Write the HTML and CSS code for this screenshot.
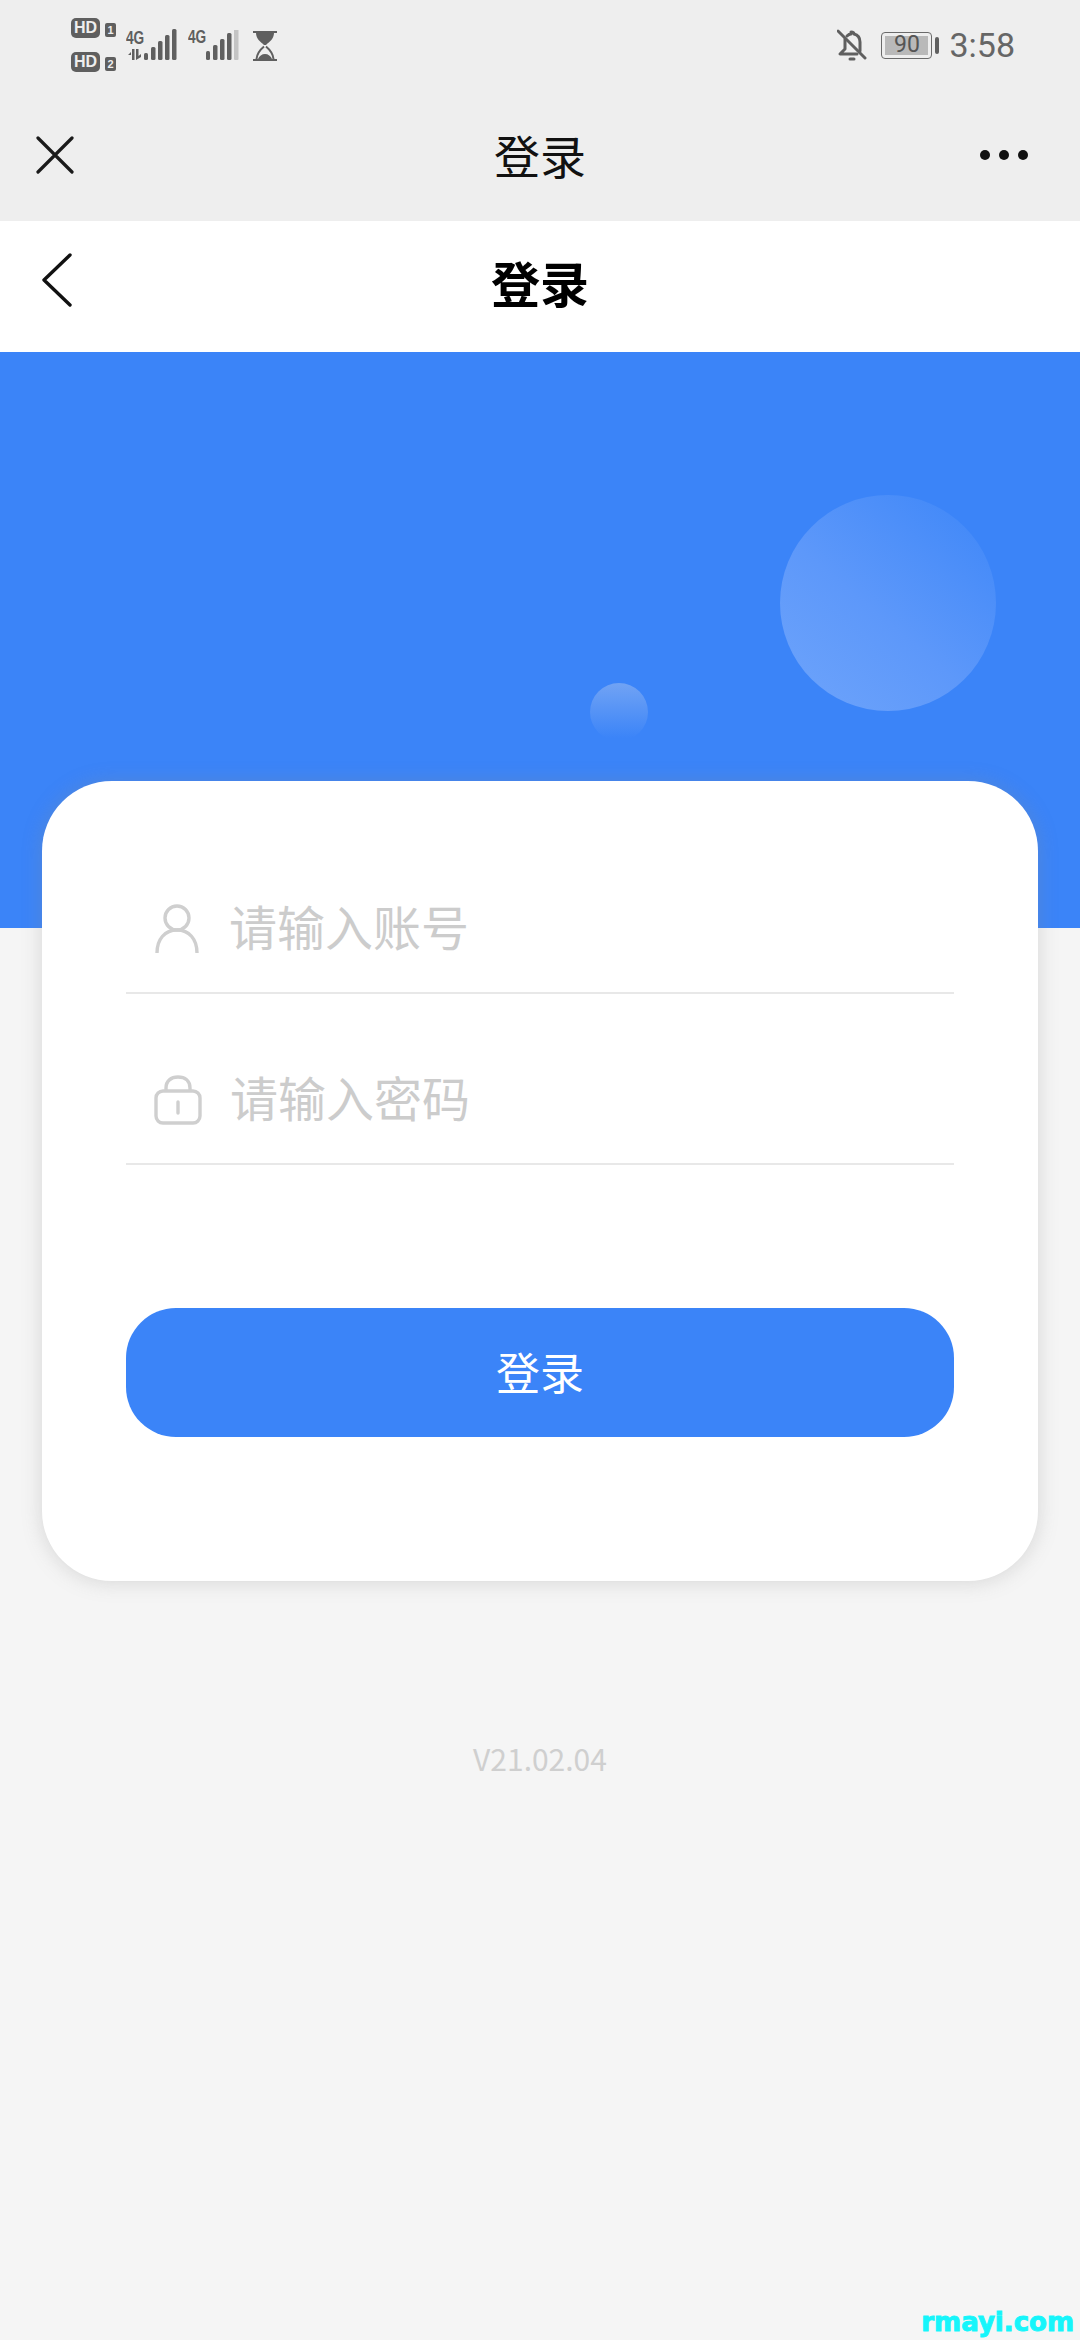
FILE: index.html
```html
<!DOCTYPE html>
<html lang="zh">
<head>
<meta charset="utf-8">
<title>登录</title>
<link rel="stylesheet" href="styles.css">
</head>
<body>
<div class="screen">
  <div class="top-gray">
    <div class="status">
      <div class="status-left">
        <div class="sims">
          <div class="sim"><span class="hd">HD</span><span class="num">1</span></div>
          <div class="sim"><span class="hd">HD</span><span class="num">2</span></div>
        </div>
        <svg class="sig-a" width="52" height="36" viewBox="0 0 52 36">
          <g fill="#5f5f5f">
            <rect x="6" y="20" width="2.500" height="11"/>
            <path d="M2 26l3-3v3zM10 20h2.500v7l2.500-2v3l-5 3z"/>
            <rect x="18" y="24" width="4" height="7" rx="1.500"/>
            <rect x="25" y="18" width="4.500" height="13" rx="1.500"/>
            <rect x="32" y="12" width="4.500" height="19" rx="1.500"/>
            <rect x="39" y="6" width="4.500" height="25" rx="1.500"/>
            <rect x="46" y="0" width="4.500" height="31" rx="1.500"/>
          </g>
        </svg>
        <span class="g4 g4-a">4G</span>
        <span class="g4 g4-b">4G</span>
        <svg class="sig-b" width="34" height="31" viewBox="0 0 34 31">
          <rect x="0" y="21" width="4" height="9" rx="1.500" fill="#5f5f5f"/>
          <rect x="7" y="15" width="4.500" height="15" rx="1.500" fill="#5f5f5f"/>
          <rect x="14" y="9" width="4.500" height="21" rx="1.500" fill="#5f5f5f"/>
          <rect x="21" y="3" width="4.500" height="27" rx="1.500" fill="#5f5f5f"/>
          <rect x="28" y="-1" width="4.500" height="31" rx="1" fill="#c4c4c4"/>
        </svg>
        <svg class="glass" width="24" height="30" viewBox="0 0 24 30">
          <path d="M0 1h24M0 29h24" stroke="#5f5f5f" stroke-width="2" fill="none"/>
          <path d="M3 2h18c0 6-5 9-8 12h-2C8 11 3 8 3 2z" fill="#5f5f5f"/>
          <path d="M11 15.500C8 18 4 22 3.500 28M13 15.500c3 2.500 7 6.500 7.500 12.500" stroke="#5f5f5f" stroke-width="2" fill="none"/>
          <path d="M5 28c1-3 4-5 7-5s6 2 7 5z" fill="#5f5f5f"/>
        </svg>
      </div>
      <div class="status-right">
        <svg class="bell" width="30" height="32" viewBox="0 0 30 32">
          <g fill="none" stroke="#5f5f5f" stroke-width="3" stroke-linecap="round" stroke-linejoin="round">
            <path d="M8 10v10l-5 5h17"/>
            <path d="M10 7c1-1 3-2 4-2v-2c2 0 3 1 3 2 4 1 6 4 6 8v9"/>
            <path d="M1 2l27 27"/>
            <path d="M13 30h4"/>
          </g>
        </svg>
        <div class="battery-wrap">
          <div class="battery"><div class="battery-fill"><span class="battery-text">90</span></div></div>
          <span class="battery-cap"></span>
        </div>
        <span class="clock">3:58</span>
      </div>
    </div>
    <div class="wx-bar">
      <svg class="wx-close" width="38" height="38" viewBox="0 0 38 38">
        <path d="M2 2l34 34M36 2L2 36" stroke="#1a1a1a" stroke-width="3.200" fill="none" stroke-linecap="round"/>
      </svg>
      <span class="wx-title">登录</span>
      <div class="wx-more"><span class="dot"></span><span class="dot"></span><span class="dot"></span></div>
    </div>
  </div>
  <div class="page-head">
    <svg class="back" width="32" height="54" viewBox="0 0 32 54">
      <path d="M29 2L3 27l26 25" stroke="#111" stroke-width="3.400" fill="none" stroke-linecap="round" stroke-linejoin="round"/>
    </svg>
    <span class="page-title">登录</span>
  </div>
  <div class="hero">
    <span class="bubble bubble-big"></span>
    <span class="bubble bubble-small"></span>
  </div>
  <div class="body">
    <div class="card">
      <div class="field">
        <svg class="field-icon icon-user" width="44" height="50" viewBox="0 0 44 50">
          <g fill="none" stroke="#cfcfcf" stroke-width="3.400">
            <circle cx="22" cy="14" r="12"/>
            <path d="M2 49c0-14 8-23 20-23s20 9 20 23"/>
          </g>
        </svg>
        <span class="placeholder">请输入账号</span>
      </div>
      <div class="field">
        <svg class="field-icon icon-lock" width="48" height="50" viewBox="0 0 48 50">
          <g fill="none" stroke="#cfcfcf" stroke-width="3.400">
            <rect x="2" y="16" width="44" height="32" rx="7"/>
            <path d="M12 16v-3c0-7 5-11 12-11s12 4 12 11v3"/>
            <path d="M24 27v11" stroke-linecap="round"/>
          </g>
        </svg>
        <span class="placeholder">请输入密码</span>
      </div>
      <div class="login-btn">登录</div>
    </div>
    <div class="version">V21.02.04</div>
    <div class="watermark">rmayi.com</div>
  </div>
</div>
</body>
</html>
```

FILE: styles.css
```css
* { box-sizing: border-box; }
html, body { margin: 0; padding: 0; }
body {
  width: 1080px;
  height: 2340px;
  overflow: hidden;
  background: #f5f5f5;
  font-family: "Noto Sans CJK SC", "Noto Sans", sans-serif;
}
.screen { width: 1080px; height: 2340px; display: flex; flex-direction: column; }

.top-gray { background: #eeeeee; height: 221px; display: flex; flex-direction: column; }
.status {
  height: 92px;
  padding: 16px 65px 0 71px;
  display: flex;
  justify-content: space-between;
  align-items: flex-start;
}
.status-left { position: relative; width: 220px; height: 60px; }
.sims { display: flex; flex-direction: column; gap: 14px; padding-top: 2px; }
.sim { display: flex; align-items: center; gap: 5px; height: 20px; }
.hd {
  width: 29px; height: 20px;
  border-radius: 5px;
  background: #5f5f5f;
  color: #eeeeee;
  font: 700 16px/20px "Liberation Sans", sans-serif;
  text-align: center;
}
.num {
  width: 11px; height: 14px;
  margin-top: 4px;
  border-radius: 2px;
  background: #5f5f5f;
  color: #eeeeee;
  font: 700 11px/14px "Liberation Sans", sans-serif;
  text-align: center;
}
.g4 {
  position: absolute;
  color: #5f5f5f;
  font: 700 19px/18px "Liberation Sans", sans-serif;
  transform: scaleX(.72);
  transform-origin: left;
}
.g4-a { left: 55px; top: 13px; }
.g4-b { left: 117px; top: 12px; }
.sig-a { position: absolute; left: 55px; top: 13px; }
.sig-b { position: absolute; left: 135px; top: 14px; }
.glass { position: absolute; left: 182px; top: 15px; }

.status-right { display: flex; align-items: center; height: 60px; margin-top: -1px; }
.bell { margin-right: 14px; }
.battery-wrap { display: flex; align-items: center; gap: 3px; margin-right: 10px; }
.battery {
  width: 51px; height: 27px;
  border: 1.500px solid #6a6a6a;
  border-radius: 4px;
  padding: 3px;
  display: flex;
}
.battery-fill { flex: 1; background: #b9b9b9; display: flex; align-items: center; justify-content: center; }
.battery-text { font: 400 23px/20px Roboto, sans-serif; color: #555; }
.battery-cap { width: 4px; height: 17px; border-radius: 2px; background: #5f5f5f; }
.clock { font: 400 34px/40px Roboto, sans-serif; color: #666; }

.wx-bar {
  height: 129px;
  padding: 0 48px 0 36px;
  display: flex;
  align-items: center;
  justify-content: space-between;
  position: relative;
}
.wx-close { margin-top: -3px; }
.wx-title {
  position: absolute;
  left: 0; right: 0; top: 31px;
  text-align: center;
  font-size: 46px;
  line-height: 62px;
  color: #111;
}
.wx-more { display: flex; gap: 9px; margin-top: -3px; margin-right: 4px; }
.dot { width: 10px; height: 10px; border-radius: 50%; background: #111; }

.page-head {
  height: 131px;
  background: #fff;
  padding-left: 41px;
  display: flex;
  align-items: center;
  position: relative;
}
.back { margin-top: -13px; }
.page-title {
  position: absolute;
  left: 0; right: 0; top: 28px;
  text-align: center;
  font-size: 49px;
  line-height: 66px;
  font-weight: 700;
  color: #000;
}

.hero { height: 576px; background: #3b84f8; position: relative; flex: none; }
.bubble { position: absolute; border-radius: 50%; }
.bubble-big {
  left: 780px; top: 143px;
  width: 216px; height: 216px;
  background: linear-gradient(40deg, #6ea4fb 0%, #5d98fa 45%, #3d86f8 100%);
}
.bubble-small {
  left: 590px; top: 331px;
  width: 58px; height: 58px;
  background: linear-gradient(180deg, #71a3f4 0%, #3b84f8 95%);
}

.body { flex: 1; display: flex; flex-direction: column; align-items: center; }
.card {
  width: 996px;
  height: 800px;
  margin-top: -147px;
  position: relative;
  background: #fff;
  border-radius: 70px;
  padding: 84px 84px 0;
  box-shadow: 0 1px 20px rgba(140, 140, 140, .3);
}
.field {
  height: 129px;
  margin-bottom: 42px;
  padding-left: 29px;
  display: flex;
  align-items: center;
  border-bottom: 2px solid #e8e8e8;
}
.field-icon { flex: none; }
.icon-user { margin-right: 31px; margin-top: 1px; }
.icon-lock { margin-left: -1px; margin-right: 29px; margin-top: 1px; }
.placeholder { font-size: 48px; line-height: 60px; color: #cccccc; margin-bottom: 8px; margin-left: -1px; }
.login-btn {
  height: 129px;
  margin-top: 143px;
  background: #3b84f8;
  border-radius: 50px;
  color: #fff;
  font-size: 44px;
  line-height: 126px;
  text-align: center;
}
.version { margin-top: 157px; font-size: 30px; line-height: 40px; color: #cfcfcf; }
.watermark {
  align-self: flex-end;
  margin-top: 527px;
  padding-right: 6px;
  font: 700 26px/34px "DejaVu Sans", sans-serif;
  color: #16f5fb;
  -webkit-text-stroke: 1px #16f5fb;
}
```
